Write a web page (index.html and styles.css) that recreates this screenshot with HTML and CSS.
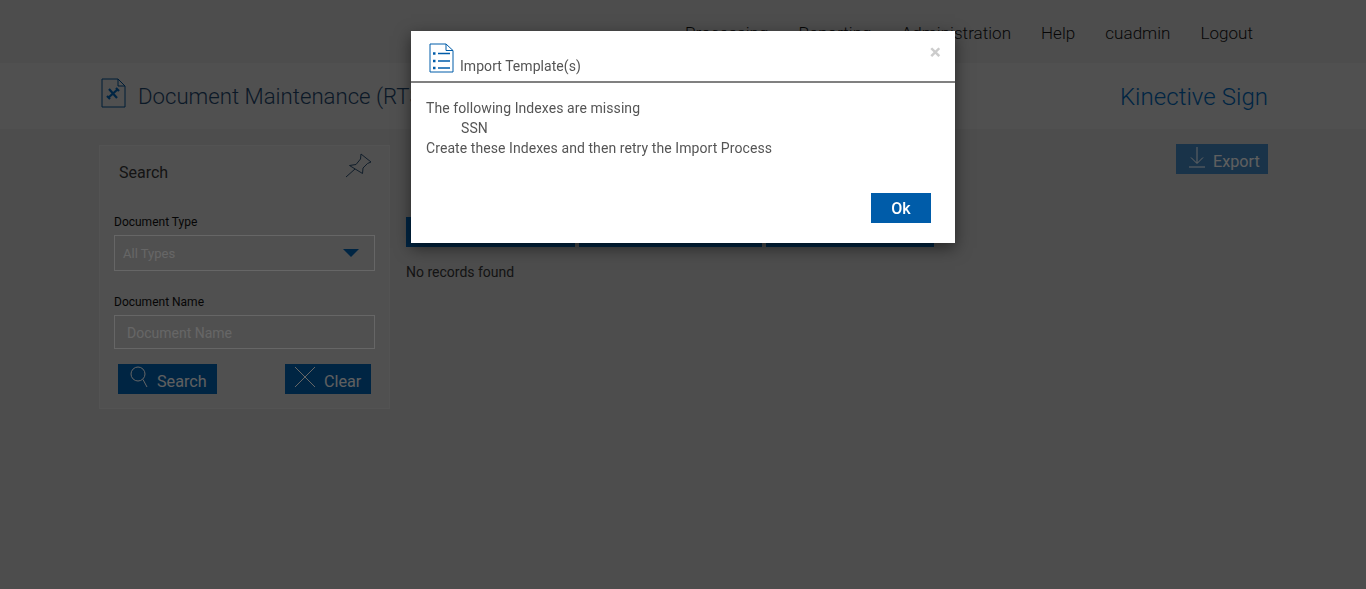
FILE: index.html
```html
<!DOCTYPE html>
<html lang="en">
<head>
    <meta charset="UTF-8">
    <title>Document Maintenance</title>
    <link rel="stylesheet" href="styles.css">
</head>
<body>

<nav class="topNav">
    <a>Processing</a>
    <a>Reporting</a>
    <a>Administration</a>
    <a>Help</a>
    <a>cuadmin</a>
    <a>Logout</a>
</nav>

<header class="titleBar">
    <div class="pageTitle">
        <svg class="titleIcon" width="26" height="30" viewBox="0 0 26 30" fill="none">
            <path d="M1 1H17L24 8V29H1Z M17 1V8H24" stroke="#004a8a" stroke-width="1"/>
            <path d="M7 20L17 11M8 11L16 20M15 10L18 13M6 18L9 21" stroke="#005ca9" stroke-width="2.2"/>
        </svg>
        <span>Document Maintenance (RTS)</span>
    </div>
    <div class="brand">Kinective Sign</div>
</header>

<main class="content">
    <aside class="searchPanel">
        <div class="panelHead">
            <span>Search</span>
            <svg width="26" height="26" viewBox="0 0 26 26" fill="none" stroke="#2a4a6a" stroke-width="1">
                <path d="M15 2L25 10L21.500 11.500L17 16L16.500 21.500L3.500 13.500L10 12.500L14.500 7Z M9 17L0 25"/>
            </svg>
        </div>
        <label class="fieldLabel">Document Type</label>
        <div class="selectBox">
            <span>All Types</span>
            <i class="caret"></i>
        </div>
        <label class="fieldLabel">Document Name</label>
        <div class="inputBox">Document Name</div>
        <div class="panelButtons">
            <button class="myButton searchButton">
                <svg width="20" height="22" viewBox="0 0 20 22" fill="none" stroke="#fff" stroke-width="1">
                    <circle cx="8" cy="8" r="7"/>
                    <path d="M13 13.500L17 21"/>
                </svg>
                Search
            </button>
            <button class="myButton clearButton">
                <svg width="22" height="22" viewBox="0 0 22 22" fill="none" stroke="#fff" stroke-width="1">
                    <path d="M1 1L21 21M21 1L1 21"/>
                </svg>
                Clear
            </button>
        </div>
    </aside>

    <section class="results">
        <div class="exportRow">
            <button class="myButton exportButton">
                <svg width="18" height="22" viewBox="0 0 18 22" fill="none" stroke="#fff" stroke-width="1">
                    <path d="M9 1V17M3 11.500L9 17.500L15 11.500M1 21H17"/>
                </svg>
                Export
            </button>
        </div>
        <div class="tabs">
            <div class="tab tabOne"></div>
            <div class="tab tabTwo"></div>
            <div class="tab tabThree"></div>
        </div>
        <p class="noRecords">No records found</p>
    </section>
</main>

<div class="backdrop"></div>

<div class="modal">
    <div class="modalHead">
        <svg width="25" height="30" viewBox="0 0 25 30" fill="none" stroke="#005ca9">
            <path d="M1 1H17L24 7.500V29H1Z M17 1V7.500H24" stroke-width="1"/>
            <path d="M9 10.500H21M9 18H21M9 25H21" stroke-width="1.500"/>
            <path d="M4 10.500H6.500M4 18H6.500M4 25H6.500" stroke-width="2.500"/>
        </svg>
        <span class="modalTitle">Import Template(s)</span>
        <span class="modalClose">×</span>
    </div>
    <div class="modalBody">
        <p>The following Indexes are missing</p>
        <p class="indent">SSN</p>
        <p>Create these Indexes and then retry the Import Process</p>
    </div>
    <div class="modalFoot">
        <button class="okButton">Ok</button>
    </div>
</div>

</body>
</html>
```

FILE: styles.css
```css
* {
    box-sizing: border-box;
}

html, body {
    height: 100%;
}

body {
    margin: 0;
    background: #c0c0c0;
    font-family: Roboto, sans-serif;
    color: #333;
    overflow: hidden;
}

.topNav {
    height: 63px;
    padding: 22px 113px 0 0;
    display: flex;
    justify-content: flex-end;
    gap: 30px;
    font-size: 17px;
    font-weight: 300;
    line-height: 22px;
    letter-spacing: .04px;
    color: #111;
}

.titleBar {
    height: 66px;
    padding: 0 98px 0 101px;
    display: flex;
    justify-content: space-between;
    align-items: center;
    background: #c7c7c7;
}

.pageTitle {
    display: flex;
    align-items: center;
    gap: 11px;
    font-size: 22.200px;
    font-weight: 300;
    color: #1c3f63;
}

.titleIcon {
    margin-top: -6px;
}

.brand {
    padding-top: 2px;
    font-size: 24px;
    font-weight: 300;
    letter-spacing: .05px;
    color: #005ca9;
}

.content {
    padding: 16px 98px 0 99px;
    display: flex;
    gap: 16px;
}

.searchPanel {
    width: 291px;
    height: 264px;
    padding: 0 14px;
    background: #c7c7c7;
    border: 1px solid #cfcfcf;
}

.panelHead {
    height: 69px;
    padding: 6px 3px 0 5px;
    display: flex;
    justify-content: space-between;
    align-items: flex-start;
    font-size: 16px;
}

.panelHead span {
    margin-top: 11px;
}

.fieldLabel {
    display: block;
    font-size: 12px;
    line-height: 14px;
    margin-bottom: 6px;
    color: #111;
}

.selectBox {
    height: 36px;
    margin-bottom: 24px;
    padding: 0 15px 0 8px;
    display: flex;
    justify-content: space-between;
    align-items: center;
    border: 1px solid #fff;
    font-size: 13px;
    color: #fff;
}

.caret {
    width: 0;
    height: 0;
    border-left: 8px solid transparent;
    border-right: 8px solid transparent;
    border-top: 8px solid #005ca9;
}

.inputBox {
    height: 34px;
    padding: 1px 12px 0;
    display: flex;
    align-items: center;
    border: 1px solid #fff;
    font-size: 14px;
    color: #fff;
}

.panelButtons {
    margin-top: 15px;
    padding: 0 4px;
    display: flex;
    justify-content: space-between;
}

.myButton {
    height: 30px;
    padding: 4px 0 0 12px;
    display: flex;
    align-items: center;
    gap: 7px;
    border: 0;
    background: #005ca9;
    color: #eee;
    font-family: Roboto, sans-serif;
    font-size: 16.200px;
    white-space: nowrap;
}

.myButton svg {
    margin-top: -8px;
}

.searchButton {
    width: 99px;
}

.clearButton {
    width: 86px;
    padding-left: 9px;
    gap: 8px;
}

.results {
    flex: 1;
}

.exportRow {
    display: flex;
    justify-content: flex-end;
    margin-top: -1px;
}

.exportButton {
    width: 92px;
    background: #3f7fb6;
}

.tabs {
    margin-top: 43px;
    display: flex;
    gap: 4px;
}

.tab {
    height: 30px;
    background: #005ca9;
}

.tabOne {
    width: 169px;
}

.tabTwo {
    width: 183px;
}

.tabThree {
    width: 168px;
}

.noRecords {
    margin: 17px 0 0;
    font-size: 14px;
    line-height: 16px;
}

.backdrop {
    position: fixed;
    inset: 0;
    background: rgba(0,0,0,.6);
}

.modal {
    position: absolute;
    left: 411px;
    top: 31px;
    width: 544px;
    height: 212px;
    background: #fff;
    box-shadow: 0 5px 15px rgba(0,0,0,.5);
}

.modalHead {
    position: relative;
    height: 52px;
    padding: 12px 15px 0 18px;
    display: flex;
    gap: 6px;
    border-bottom: 2px solid #808080;
}

.modalTitle {
    margin-top: 15px;
    font-size: 14px;
    line-height: 16px;
    letter-spacing: .05px;
    color: #555;
}

.modalClose {
    position: absolute;
    right: 14px;
    top: 11px;
    font-size: 21px;
    line-height: 21px;
    font-weight: 700;
    color: #ccc;
}

.modalBody {
    padding: 15px 15px 0;
    height: 110px;
    font-size: 14px;
    line-height: 20px;
    letter-spacing: .075px;
    color: #555;
}

.modalBody p {
    margin: 0;
}

.indent {
    padding-left: 35px;
}

.modalFoot {
    display: flex;
    justify-content: flex-end;
    padding-right: 24px;
}

.okButton {
    width: 60px;
    height: 30px;
    border: 0;
    background: #005ca9;
    color: #fff;
    font-family: Roboto, sans-serif;
    font-size: 16px;
    font-weight: 500;
}
```
